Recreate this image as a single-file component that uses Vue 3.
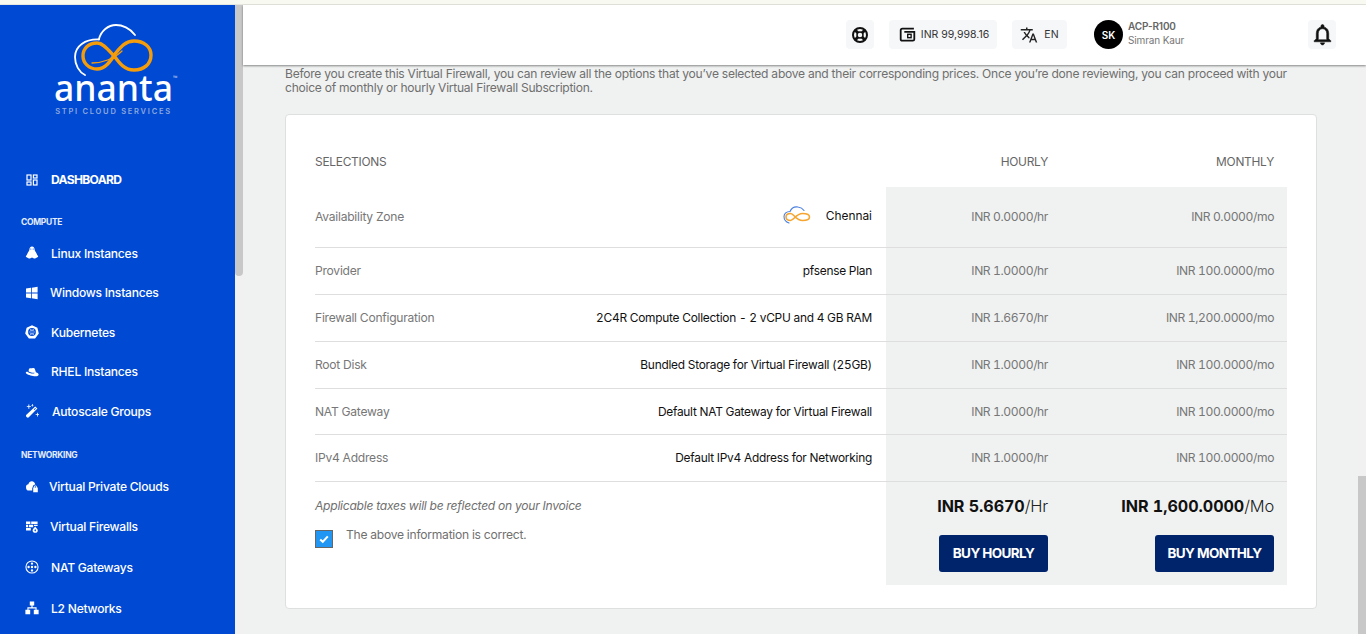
<script setup>
const ring = 'M.4 7a6.6 6.6 0 1 0 13.2 0a6.6 6.6 0 1 0 -13.2 0ZM1.5 7a5.5 5.5 0 1 1 11 0a5.5 5.5 0 1 1 -11 0Z'
const dot = (x, y) => `M${x - 1.2} ${y}a1.2 1.2 0 1 0 2.4 0a1.2 1.2 0 1 0 -2.4 0Z`
const icons = {
  linux: 'M7 .5C5.2 .5 4.4 1.9 4.4 3.6C4.4 4.8 3.4 5.8 2.6 7.2C1.9 8.4 1.9 9.2 1.2 9.8C.6 10.4 .8 11 1.6 11.2L3.4 12.3C4.6 12.9 5.8 12.2 6.2 11.8H7.8C8.2 12.2 9.4 12.9 10.6 12.3L12.4 11.2C13.2 11 13.4 10.4 12.8 9.8C12.1 9.2 12.1 8.4 11.4 7.2C10.6 5.8 9.6 4.8 9.6 3.6C9.6 1.9 8.8 .5 7 .5ZM5.8 2.4a.6.6 0 1 1 0 1.2a.6.6 0 1 1 0-1.2ZM8.2 2.4a.6.6 0 1 1 0 1.2a.6.6 0 1 1 0-1.2Z',
  windows: 'M1 2.6L6 1.8V6.6H1ZM6.8 1.7L12.6 .8V6.6H6.8ZM1 7.4H6V12.2L1 11.4ZM6.8 7.4H12.6V13.2L6.8 12.3Z',
  k8s: 'M7 .2L12.4 2.8L13.8 8.6L10.1 13.4H3.9L.2 8.6L1.6 2.8ZM7 3.1A3.9 3.9 0 1 0 7 10.9A3.9 3.9 0 1 0 7 3.1ZM6.7 3.9H7.3V6.2H6.7ZM6.7 7.8H7.3V10.1H6.7ZM3.9 6.7H6.2V7.3H3.9ZM7.8 6.7H10.1V7.3H7.8ZM4.8 4.4L5.2 4L6.6 5.9L6.1 6.2ZM8.8 4L9.2 4.4L7.9 6.2L7.4 5.9ZM6.1 7.8L6.6 8.1L5.2 10L4.8 9.6ZM7.9 7.8L9.2 9.6L8.8 10L7.4 8.1Z',
  rhel: 'M4.4 3.4C5.4 2.8 6.2 3.4 7.2 3.2C8.6 2.9 9.6 3.2 10 4.6L10.9 7.2C12.6 7.8 13.8 8.6 13.6 9.7C13.3 11.2 10.8 11.6 8 11C5 10.4 .9 9 .8 7.7C.7 7 1.6 6.6 2.6 6.7C3.4 7.6 6 8.6 8 8.6C9.2 8.6 9.8 8.3 9.6 7.8C7.8 8 5.4 7.4 3.7 6.4C3.6 5 3.8 3.9 4.4 3.4Z',
  wand: 'M10.2 2.4L12.4 4.6L3.8 13.2C3.2 13.8 2.4 13.8 1.8 13.2L1.4 12.8C.8 12.2 .8 11.4 1.4 10.8ZM10.2 3.9L8.7 5.4L9.4 6.1L10.9 4.6ZM3.4 .6H4.3V2.2H5.9V3.1H4.3V4.7H3.4V3.1H1.8V2.2H3.4ZM12 8.8H12.8V10.2H14.2V11H12.8V12.4H12V11H10.6V10.2H12ZM7 .1H7.7V.9H8.5V1.6H7.7V2.4H7V1.6H6.2V.9H7Z',
  cloud: 'M1 8C1 6.4 2.2 5.3 3.4 5.3C3.8 3.4 5.2 2.3 6.8 2.3C8.6 2.3 10 3.6 10.3 5.5C8.8 5.6 7.8 6.7 7.8 8V8.5H7.2V11.6H3C1.8 11.6 1 10 1 8ZM8.2 8.6H8.8V7.9C8.8 7 9.5 6.4 10.4 6.4C11.3 6.4 12 7 12 7.9V8.6H12.8V13.2H8.2ZM9.7 8.6H11.1V7.9C11.1 7.5 10.8 7.2 10.4 7.2C10 7.2 9.7 7.5 9.7 7.9Z',
  firewall: 'M1 1.5H5.4V4H1ZM6.2 1.5H12.6V4H6.2ZM1 4.8H3V7.2H1ZM3.8 4.8H8.2V7.2H3.8ZM1 8H5.8V10.6H1ZM9 4.8H12.6V6H9ZM10.2 6.4C10.6 7.6 12.8 8.4 12.8 10.4C12.8 11.9 11.7 12.8 10.2 12.8C8.7 12.8 7.6 11.9 7.6 10.4C7.6 8.4 9.8 7.6 10.2 6.4ZM10.2 9C9.8 9.6 9.4 10 9.4 10.6C9.4 11.1 9.7 11.4 10.2 11.4C10.7 11.4 11 11.1 11 10.6C11 10 10.6 9.6 10.2 9Z',
  nat: ring + dot(7, 7) + dot(7, 3.6) + dot(7, 10.4) + dot(3.6, 7) + dot(10.4, 7),
  l2: 'M4.8 .6H9.2V4.6H7.6V6.2H11.6V8.8H13.6V13.2H8.8V8.8H10.5V7.4H3.5V8.8H5.2V13.2H.4V8.8H2.4V6.2H6.4V4.6H4.8Z'
}
const groups = [
  {
    title: 'COMPUTE',
    cls: 'g-compute',
    items: [
      { label: 'Linux Instances', icon: 'linux', nudge: 0 },
      { label: 'Windows Instances', icon: 'windows', nudge: -1 },
      { label: 'Kubernetes', icon: 'k8s', nudge: 0 },
      { label: 'RHEL Instances', icon: 'rhel', nudge: 0 },
      { label: 'Autoscale Groups', icon: 'wand', nudge: 1 }
    ]
  },
  {
    title: 'NETWORKING',
    cls: 'g-network',
    items: [
      { label: 'Virtual Private Clouds', icon: 'cloud', nudge: -2 },
      { label: 'Virtual Firewalls', icon: 'firewall', nudge: -1 },
      { label: 'NAT Gateways', icon: 'nat', nudge: 0 },
      { label: 'L2 Networks', icon: 'l2', nudge: 0 }
    ]
  }
]
const rows = [
  { name: 'Provider', value: 'pfsense Plan', hr: 'INR 1.0000/hr', mo: 'INR 100.0000/mo' },
  { name: 'Firewall Configuration', value: '2C4R Compute Collection - 2 vCPU and 4 GB RAM', hr: 'INR 1.6670/hr', mo: 'INR 1,200.0000/mo' },
  { name: 'Root Disk', value: 'Bundled Storage for Virtual Firewall (25GB)', hr: 'INR 1.0000/hr', mo: 'INR 100.0000/mo' },
  { name: 'NAT Gateway', value: 'Default NAT Gateway for Virtual Firewall', hr: 'INR 1.0000/hr', mo: 'INR 100.0000/mo', short: true },
  { name: 'IPv4 Address', value: 'Default IPv4 Address for Networking', hr: 'INR 1.0000/hr', mo: 'INR 100.0000/mo' }
]
</script>

<template>
  <div class="page">
    <div class="strip"></div>
    <div class="shell">
      <aside class="sidebar">
        <div class="side-inner">
          <div class="logo">
            <svg class="logo-mark" viewBox="0 0 84 54" width="84" height="54" fill="none" stroke-linecap="round">
              <path d="M63 11C58 4 50 1 44 1C36 1 29 7 27 15" stroke="#fff" stroke-width="1.8"/>
              <path d="M27 15.5C13 15 3 22 3 33C3 41 7 48 13 51" stroke="#fff" stroke-width="1.8"/>
              <path d="M11 32C11 24 17 19 25 19C32 19 37 27 43 33C48 40 53 46 62 46C72 46 79 40 79 31C79 23 72 17 62 17C53 17 48 24 43 30C38 38 33 45 25 45C17 45 11 39 11 32Z" stroke="#f59c0b" stroke-width="3.4"/>
              <path d="M20 39C30 39 42 35 50 27" stroke="#f59c0b" stroke-width="1.3"/>
            </svg>
            <div class="logo-name">ananta<sup>™</sup></div>
            <div class="logo-sub">STPI CLOUD SERVICES</div>
          </div>
          <nav class="nav">
            <div class="nav-item nav-dash">
              <span class="ico">
                <svg viewBox="0 0 12 12" width="12" height="12" fill="none" stroke="#fff" stroke-width="1.2">
                  <rect x="1" y="1" width="4" height="5"/><rect x="7.4" y="1" width="3.6" height="3"/><rect x="1" y="8" width="4" height="3"/><rect x="7.4" y="6" width="3.6" height="5"/>
                </svg>
              </span>
              <span class="dash-label">DASHBOARD</span>
            </div>
            <div v-for="g in groups" :key="g.title" :class="g.cls">
              <div class="section">{{ g.title }}</div>
              <div v-for="it in g.items" :key="it.label" class="nav-item">
                <span class="ico">
                  <svg viewBox="0 0 14 14" width="14" height="14" fill="#fff"><path fill-rule="evenodd" :d="icons[it.icon]"/></svg>
                </span>
                <span :style="{ marginLeft: it.nudge + 'px' }">{{ it.label }}</span>
              </div>
            </div>
          </nav>
        </div>
        <div class="side-scroll"><div class="side-thumb"></div></div>
      </aside>

      <div class="main">
        <header class="topbar">
          <div class="chip chip-icon">
            <svg viewBox="0 0 18 18" width="18" height="18" fill="none" stroke="#111">
              <circle cx="9" cy="9" r="7" stroke-width="2"/><circle cx="9" cy="9" r="3" stroke-width="1.5"/>
              <path d="M4 4L6.8 6.8M14 4L11.2 6.8M4 14L6.8 11.2M14 14L11.2 11.2" stroke-width="3"/>
            </svg>
          </div>
          <div class="chip chip-wallet">
            <svg viewBox="0 0 16 16" width="17" height="17" fill="none" stroke="#111" stroke-width="1.7">
              <path d="M14 2.4H3.2C2.4 2.4 1.6 3.2 1.6 4V12.4C1.6 13.2 2.4 13.8 3.2 13.8H13C13.8 13.8 14.4 13.2 14.4 12.4V5.6H5"/>
              <rect x="8.2" y="7.8" width="3.2" height="3.2" stroke-width="1.3"/>
            </svg>
            <span>INR 99,998.16</span>
          </div>
          <div class="chip chip-lang">
            <svg viewBox="0 0 24 24" width="18" height="18" fill="#222">
              <path d="M12.87 15.07l-2.54-2.51.03-.03c1.74-1.94 2.98-4.17 3.71-6.53H17V4h-7V2H8v2H1v1.99h11.17C11.5 7.92 10.44 9.75 9 11.35 8.07 10.32 7.3 9.19 6.69 8h-2c.73 1.63 1.73 3.17 2.98 4.56l-5.09 5.02L4 19l5-5 3.11 3.11.76-2.04zM18.5 10h-2L12 22h2l1.12-3h4.75L21 22h2l-4.5-12zm-2.62 7l1.62-4.33L19.12 17h-3.24z"/>
            </svg>
            <span>EN</span>
          </div>
          <div class="user">
            <div class="avatar">SK</div>
            <div class="user-text">
              <div class="user-code">ACP-R100</div>
              <div class="user-name">Simran Kaur</div>
            </div>
          </div>
          <div class="chip chip-icon">
            <svg viewBox="0 0 24 24" width="25" height="25" fill="#111" stroke="#111" stroke-width=".5">
              <path d="M12 22c1.1 0 2-.9 2-2h-4c0 1.1.9 2 2 2zm6-6v-5c0-3.07-1.63-5.64-4.5-6.32V4c0-.83-.67-1.5-1.5-1.5s-1.5.67-1.5 1.5v.68C7.64 5.36 6 7.92 6 11v5l-2 2v1h16v-1l-2-2zm-2 1H8v-6c0-2.48 1.51-4.5 4-4.5s4 2.02 4 4.5v6z"/>
            </svg>
          </div>
        </header>

        <div class="content-wrap">
          <main class="content">
            <p class="intro">Before you create this Virtual Firewall, you can review all the options that you’ve selected above and their corresponding prices. Once you’re done reviewing, you can proceed with your choice of monthly or hourly Virtual Firewall Subscription.</p>
            <section class="card">
              <table class="tbl">
                <colgroup><col class="c1"><col class="c2"><col class="c3"><col class="c4"></colgroup>
                <thead>
                  <tr class="head">
                    <th class="left">SELECTIONS</th><th></th><th class="num">HOURLY</th><th class="num">MONTHLY</th>
                  </tr>
                </thead>
                <tbody>
                  <tr class="row row-az">
                    <td class="left">Availability Zone</td>
                    <td class="val">
                      <span class="az">
                        <svg viewBox="0 0 28 20" width="28" height="20" fill="none" stroke-linecap="round">
                          <path d="M6 18C3 17 1 14.500 1 11.500C1 8.500 3.500 6.500 7 6.500C8.500 3 12 1.500 15 2C18 2.400 20 4 21 5.500" stroke="#4a7fe0" stroke-width="1.100"/>
                          <path d="M3 12C3 9.500 5 8.500 7.500 8.500C11 8.500 13 15.500 19.500 15.500C24 15.500 26.500 14 26.500 12C26.500 10 24 8.500 19.500 8.500C13 8.500 11 15.500 7.500 15.500C5 15.500 3 14.500 3 12Z" stroke="#f5a530" stroke-width="1.600"/>
                        </svg>
                        <span>Chennai</span>
                      </span>
                    </td>
                    <td class="num shade">INR 0.0000/hr</td>
                    <td class="num shade">INR 0.0000/mo</td>
                  </tr>
                  <tr v-for="r in rows" :key="r.name" class="row" :class="{ 'row-short': r.short }">
                    <td class="left">{{ r.name }}</td>
                    <td class="val">{{ r.value }}</td>
                    <td class="num shade">{{ r.hr }}</td>
                    <td class="num shade">{{ r.mo }}</td>
                  </tr>
                  <tr class="foot">
                    <td colspan="2" class="foot-left">
                      <div class="taxes">Applicable taxes will be reflected on your Invoice</div>
                      <label class="confirm">
                        <span class="check">
                          <svg viewBox="0 0 12 12" width="12" height="12"><path d="M2.200 6.400L4.800 8.800L9.800 3.400" fill="none" stroke="#fff" stroke-width="2"/></svg>
                        </span>
                        <span>The above information is correct.</span>
                      </label>
                    </td>
                    <td class="num shade foot-cell">
                      <div class="total"><b>INR 5.6670</b>/Hr</div>
                      <button class="buy buy-hr">BUY HOURLY</button>
                    </td>
                    <td class="num shade foot-cell">
                      <div class="total"><b>INR 1,600.0000</b>/Mo</div>
                      <button class="buy buy-mo">BUY MONTHLY</button>
                    </td>
                  </tr>
                </tbody>
              </table>
            </section>
          </main>
          <div class="main-scroll"><div class="main-thumb"></div></div>
        </div>
      </div>
    </div>
  </div>
</template>

<style>
html, body { margin: 0; height: 100%; overflow: hidden; }
</style>

<style scoped>
.page {
  width: 1366px; height: 634px; overflow: hidden; background: #f0f2f1;
  font-family: Inter, "Liberation Sans", sans-serif; font-size: 12px; color: #6a6a6a;
  letter-spacing: -0.25px; display: flex; flex-direction: column;
}
.strip { height: 5px; background: #f8f9f0; border-bottom: 1px solid #e6e8df; box-sizing: border-box; flex: none; }
.shell { flex: 1; display: flex; min-height: 0; }

.sidebar { width: 243px; flex: none; display: flex; overflow: hidden; }
.side-inner { width: 235px; background: #004ad3; color: #fff; flex: none; }
.side-scroll { width: 8px; background: #f1f1f1; }
.side-thumb { height: 271px; background: #c8c8c8; border-radius: 0 0 4px 4px; }

.logo { height: 155px; box-sizing: border-box; padding: 19px 8px 0 0; display: flex; flex-direction: column; align-items: center; }
.logo-mark { flex: none; }
.logo-name { font-family: "Noto Sans", sans-serif; font-size: 35.500px; font-weight: 500; line-height: 26px; letter-spacing: 0; position: relative; margin-top: -4px; }
.logo-name sup { font-size: 6px; position: absolute; top: 0; left: 100%; line-height: 8px; opacity: .7; letter-spacing: 0; font-weight: 400; }
.logo-sub { font-size: 7.500px; letter-spacing: 1.750px; font-weight: 600; color: #8ea8dc; margin-top: 7px; line-height: 9px; }

.nav { font-size: 12.100px; font-weight: 500; }
.nav-item { height: 39.500px; display: flex; align-items: center; padding-left: 25px; }
.nav-dash { font-weight: 700; }
.ico { width: 14px; height: 14px; margin-right: 12px; display: flex; align-items: center; justify-content: center; flex: none; }
.dash-label { letter-spacing: -.7px; }
.section { font-size: 8.500px; font-weight: 700; line-height: 10px; padding: 17px 0 7px 21px; letter-spacing: -.3px; color: #e4ecfb; }
.g-network .section { padding: 19px 0 6px 21px; }
.g-network .nav-item { height: 40.600px; }

.main { flex: 1; min-width: 0; display: flex; flex-direction: column; }
.topbar {
  height: 60px; flex: none; box-sizing: border-box; background: #fff; display: flex; align-items: center;
  padding: 0 30px 1px 603px; box-shadow: 0 1px 2px rgba(0,0,0,.45); position: relative; z-index: 2;
  font-size: 10.500px; color: #333;
}
.chip { height: 29px; background: #f6f7f9; border-radius: 4px; display: flex; align-items: center; justify-content: center; box-sizing: border-box; flex: none; }
.chip-icon { width: 28px; }
.chip-wallet { width: 108px; margin-left: 15px; gap: 5px; letter-spacing: 0; padding-left: 2px; }
.chip-lang { width: 55px; margin-left: 15px; gap: 6px; letter-spacing: .2px; }
.user { display: flex; align-items: center; margin-left: 27px; width: 214px; flex: none; }
.avatar { width: 29px; height: 29px; border-radius: 50%; background: #000; color: #fff; font-size: 10px; font-weight: 600; display: flex; align-items: center; justify-content: center; letter-spacing: 0; }
.user-text { margin-left: 5px; font-size: 10px; color: #666; letter-spacing: -.15px; margin-top: -2px; }
.user-code { font-weight: 600; line-height: 14px; }
.user-name { line-height: 15px; color: #777; }

.content-wrap { flex: 1; min-height: 0; display: flex; }
.content { flex: 1; min-width: 0; padding: 2px 41px 0 42px; }
.main-scroll { width: 8px; background: #f1f1f1; display: flex; flex-direction: column; justify-content: flex-end; flex: none; }
.main-thumb { height: 158px; background: #c8c8c8; }
.intro { margin: 0 0 19px; line-height: 14px; font-size: 12.060px; color: #6f6f6f; }
.card { background: #fff; border: 1px solid #dde0df; border-radius: 4px; height: 495px; box-sizing: border-box; padding: 25px 29px 23px; }

.tbl { width: 972px; border-collapse: collapse; table-layout: fixed; font-size: 12.100px; font-variant-numeric: tabular-nums; }
.c1 { width: 240px; } .c2 { width: 331px; } .c3 { width: 175px; } .c4 { width: 226px; }
.tbl th { font-weight: 400; height: 43px; padding: 0 13px 4px 0; font-size: 11.900px; color: #666; }
.tbl th.left { padding-left: 0; text-align: left; }
.tbl th.num { text-align: right; }
.tbl td { padding: 0; border-bottom: 1px solid #dedede; }
.left { text-align: left; color: #777; }
.tbl td.val { text-align: right; color: #111; padding-right: 14px; font-size: 11.900px; }
.tbl td.num { text-align: right; padding-right: 13px; letter-spacing: -.4px; }
.shade { background: #f0f2f1; color: #777; }
.row { height: 47px; }
.row-az { height: 60px; }
.row-short { height: 46px; }
.tbl .foot td { border-bottom: 0; vertical-align: top; }
.az { display: inline-flex; align-items: center; gap: 15px; letter-spacing: 0; }
.foot { height: 104px; }
.taxes { font-style: italic; color: #707070; margin-top: 16px; line-height: 16px; }
.confirm { display: flex; margin-top: 13px; color: #707070; line-height: 16px; }
.check { width: 18px; height: 18px; box-sizing: border-box; border: 1px solid #666; background: #2196f3; display: flex; align-items: center; justify-content: center; margin-right: 13px; margin-top: 3px; }
.total { font-size: 16.500px; line-height: 22px; margin-top: 13px; color: #222; font-weight: 300; letter-spacing: -.2px; }
.total b { font-weight: 700; color: #111; font-size: 16.100px; letter-spacing: -.05px; }
.buy { height: 37px; margin-top: 18px; border: 0; border-radius: 3px; background: #00246b; color: #fff; font: 700 13.500px Inter, sans-serif; letter-spacing: -.6px; padding: 0; }
.buy-hr { width: 109px; }
.buy-mo { width: 119px; }
</style>
